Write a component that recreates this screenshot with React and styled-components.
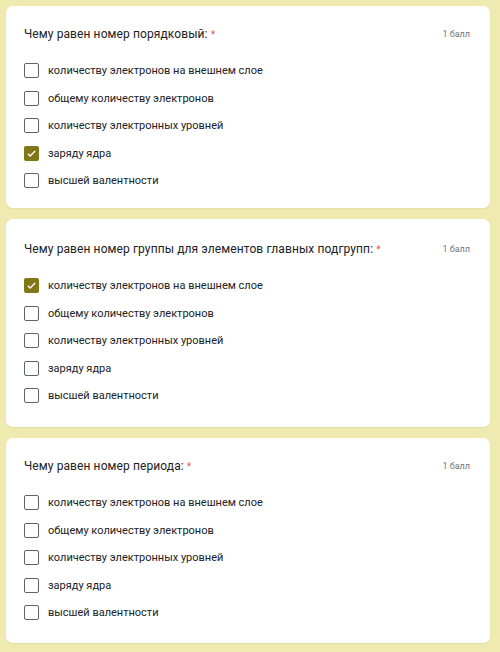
import React from "react"
import styled, { createGlobalStyle } from "styled-components"

const questions = [
   { title: "Чему равен номер порядковый:", checked: 3, h: 202, top: 21 },
   { title: "Чему равен номер группы для элементов главных подгрупп:", checked: 0, h: 208, top: 23 },
   { title: "Чему равен номер периода:", checked: -1, h: 205, top: 21 },
]

const options = [
   "количеству электронов на внешнем слое",
   "общему количеству электронов",
   "количеству электронных уровней",
   "заряду ядра",
   "высшей валентности",
]

const GlobalStyle = createGlobalStyle`
   html, body {
      margin: 0;
      padding: 0;
      background: #efeab0;
   }
   body {
      font-family: Roboto, "Liberation Sans", Arial, sans-serif;
   }
`

const Page = styled.div`
   display: flex;
   flex-direction: column;
   gap: 11px;
   padding: 6px 10px 9px 6px;
   min-height: 652px;
   box-sizing: border-box;
`

const Card = styled.div`
   background: #fff;
   border-radius: 7px;
   box-shadow: 0 1px 2px rgba(0, 0, 0, 0.06);
   padding: ${p => p.$top}px 18px 20px 18px;
   height: ${p => p.$h}px;
   box-sizing: border-box;
`

const Header = styled.div`
   display: flex;
   justify-content: space-between;
   align-items: center;
   margin-bottom: 22px;
`

const Title = styled.div`
   font-size: 12px;
   color: #202124;
   letter-spacing: 0.1px;
`

const Star = styled.span`
   color: #e0584e;
   margin-left: 3px;
   font-size: 10px;
`

const Points = styled.div`
   font-size: 9px;
   color: #70757a;
   margin-right: 2px;
`

const List = styled.div`
   display: flex;
   flex-direction: column;
   gap: 12px;
`

const Row = styled.div`
   display: flex;
   align-items: center;
   gap: 9px;
   height: 15.5px;
`

const Box = styled.div`
   width: 15px;
   height: 15px;
   box-sizing: border-box;
   border-radius: 2px;
   border: ${p => (p.$on ? "none" : "1.6px solid #5f6368")};
   background: ${p => (p.$on ? "#827717" : "transparent")};
   display: flex;
   align-items: center;
   justify-content: center;
`

const Label = styled.span`
   font-size: 11px;
   color: #202124;
`

const Check = () => (
   <svg width="11" height="11" viewBox="0 0 24 24">
      <path d="M4 12.5l5 5L20 6.5" fill="none" stroke="#fff" strokeWidth="3" />
   </svg>
)

const App = () => {
   return (
      <Page>
         <GlobalStyle />
         {questions.map((q, i) => (
            <Card key={i} $h={q.h} $top={q.top}>
               <Header>
                  <Title>
                     {q.title}
                     <Star>*</Star>
                  </Title>
                  <Points>1 балл</Points>
               </Header>
               <List>
                  {options.map((o, j) => (
                     <Row key={j}>
                        <Box $on={j === q.checked}>{j === q.checked && <Check />}</Box>
                        <Label>{o}</Label>
                     </Row>
                  ))}
               </List>
            </Card>
         ))}
      </Page>
   )
}

export default App
